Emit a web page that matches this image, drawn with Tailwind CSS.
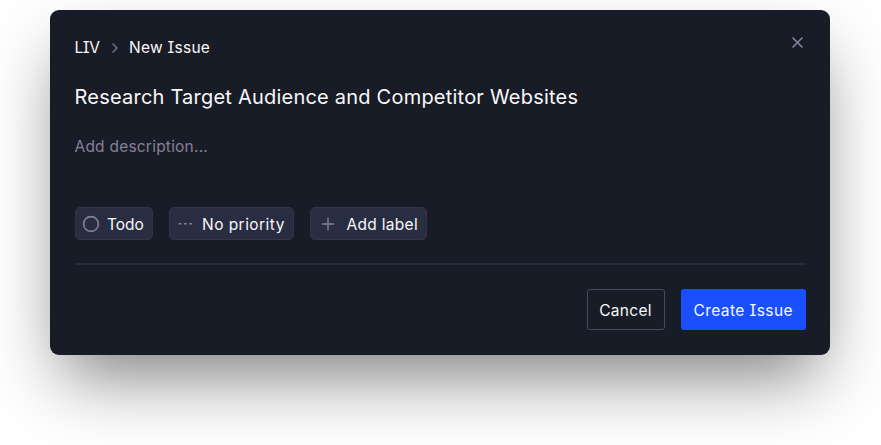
<!DOCTYPE html>
<html lang="en">
<head>
<meta charset="utf-8">
<title>New Issue</title>
<script src="https://cdn.jsdelivr.net/npm/@tailwindcss/browser@4"></script>
</head>
<body class="h-[445px] overflow-hidden bg-white px-[50px] pt-[10px] font-[Inter,sans-serif] text-[16px] leading-[20px] text-[#f8f8fa] [font-feature-settings:'cv08'_1]">
<main class="flex h-[345px] w-[780.3px] flex-col rounded-[9px] bg-[#181c26] px-[24.5px] shadow-[0_33px_66px_-12px_rgba(0,0,0,0.5)]">
  <header class="flex h-[38px] items-start justify-between pt-[28px]">
    <nav class="flex h-[20px] items-center whitespace-nowrap">
      <span class="w-[25px] text-[15.5px] tracking-[-0.4px]">LIV</span>
      <svg class="ml-[10px] mr-[9px] -mt-px h-[12px] w-[10px]" viewBox="0 0 10 12" fill="none" stroke="#74748d" stroke-width="1.5" stroke-linecap="round" stroke-linejoin="round"><path d="M3 2 7 6 3 10"/></svg>
      <span class="ml-[0.5px] text-[15.5px] tracking-[0.25px]">New Issue</span>
    </nav>
    <button class="mr-[3px] -mt-px flex size-[11px] items-center justify-center" aria-label="Close"><svg class="size-[11px]" viewBox="0 0 11 11" fill="none" stroke="#8c88a2" stroke-width="1.5" stroke-linecap="round"><path d="m1 1 9 9M10 1 1 10"/></svg></button>
  </header>
  <h1 class="mt-[34px] h-[30px] text-[20px] leading-[30px] tracking-[0.22px] whitespace-nowrap">Research Target Audience and Competitor Websites</h1>
  <p class="mt-[25px] h-[20px] text-[15.5px] tracking-[0.22px] text-[#858199]">Add description...</p>
  <div class="mt-[50px] flex gap-[16px] whitespace-nowrap">
    <button class="flex h-[33px] w-[78.5px] items-center rounded-[5px] border border-[#30354d] bg-[#292d42] pl-[6.5px]"><svg class="mr-[7px] size-[18px] shrink-0" viewBox="0 0 18 18" fill="none" stroke="#858199" stroke-width="1.6"><circle cx="9" cy="9" r="7.4"/></svg><span class="pt-[2px] text-[15.5px]">Todo</span></button>
    <button class="flex h-[33px] w-[124.5px] items-center rounded-[5px] border border-[#30354d] bg-[#292d42] pl-[7px]"><svg class="mr-[7px] size-[18px] shrink-0" viewBox="0 0 18 18" fill="#858199"><rect x="1.6" y="8" width="3" height="1.5" rx=".5"/><rect x="6.9" y="8" width="3" height="1.5" rx=".5"/><rect x="12.2" y="8" width="3" height="1.5" rx=".5"/></svg><span class="pt-[2px] text-[15.5px] tracking-[0.45px]">No priority</span></button>
    <button class="flex h-[33px] w-[117.5px] items-center rounded-[5px] border border-[#30354d] bg-[#292d42] pl-[8px]"><svg class="mr-[10px] size-[18px] shrink-0" viewBox="0 0 18 18" fill="none" stroke="#858199" stroke-width="1.4" stroke-linecap="round"><path d="M9 3.3v11.4M3.3 9h11.4"/></svg><span class="pt-[2px] text-[15.5px] tracking-[0.3px]">Add label</span></button>
  </div>
  <div class="mt-[23px] h-[2px] w-[731px] bg-[#272a3f]"></div>
  <footer class="mt-[24px] flex w-[731px] justify-end gap-[16.5px] whitespace-nowrap">
    <button class="h-[41px] w-[78px] rounded-[3px] border border-[#464965] pt-[2px] text-[15.5px] tracking-[0.3px]">Cancel</button>
    <button class="h-[41px] w-[124.5px] rounded-[3px] bg-[#1a4fff] pt-[2px] text-[15.5px] tracking-[0.42px]">Create Issue</button>
  </footer>
</main>
</body>
</html>
